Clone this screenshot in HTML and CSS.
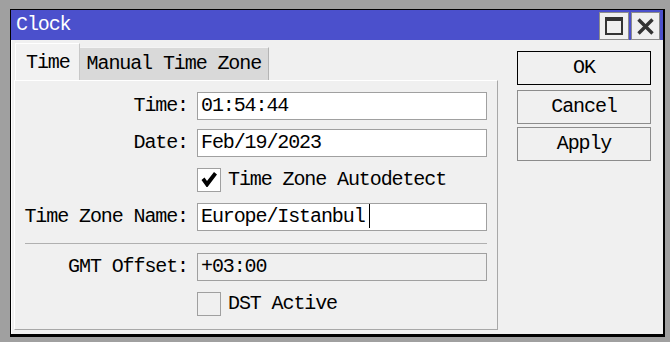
FILE: index.html
```html
<!DOCTYPE html>
<html>
<head>
<meta charset="utf-8">
<title>Clock</title>
<link rel="stylesheet" href="styles.css">
</head>
<body>
<div class="window">
  <div class="titlebar">
    <span class="title">Clock</span>
    <div class="tbtns">
      <div class="tbtn">
        <svg width="30" height="28" viewBox="0 0 30 28"><rect x="7" y="6" width="16" height="16" fill="none" stroke="#333" stroke-width="2"/><rect x="6" y="5" width="18" height="4" fill="#333"/></svg>
      </div>
      <div class="tbtn">
        <svg width="29" height="28" viewBox="0 0 29 28"><path d="M7.5 7.5 L21.5 21.5 M21.5 7.5 L7.5 21.5" stroke="#333" stroke-width="3.4" fill="none"/></svg>
      </div>
    </div>
  </div>
  <div class="content">
    <div class="left">
      <div class="tabs">
        <div class="tab active">Time</div>
        <div class="tab">Manual Time Zone</div>
      </div>
      <div class="panel">
        <div class="label">Time:</div>
        <div class="field">01:54:44</div>
        <div class="label">Date:</div>
        <div class="field">Feb/19/2023</div>
        <div class="label"></div>
        <div class="check-row">
          <span class="checkbox"><svg width="22" height="22" viewBox="0 0 22 22"><path d="M3.5 11 L6.5 8.5 L9 12 L16 3 L19 5.5 L9.5 18 L8.5 18 Z" fill="#000"/></svg></span>
          <span>Time Zone Autodetect</span>
        </div>
        <div class="label">Time Zone Name:</div>
        <div class="field">Europe/Istanbul<span class="caret"></span></div>
        <div class="sep"></div>
        <div class="label">GMT Offset:</div>
        <div class="field disabled">+03:00</div>
        <div class="label"></div>
        <div class="check-row">
          <span class="checkbox disabled"></span>
          <span>DST Active</span>
        </div>
      </div>
    </div>
    <div class="buttons">
      <div class="btn default">OK</div>
      <div class="btn">Cancel</div>
      <div class="btn">Apply</div>
    </div>
  </div>
</div>
</body>
</html>
```
FILE: styles.css
```css
* { box-sizing: border-box; }
html, body { margin: 0; padding: 0; }
body {
  background: #a0a0a0;
  width: 670px;
  height: 342px;
  overflow: hidden;
  font-family: "Liberation Mono", "DejaVu Sans Mono", monospace;
  font-size: 20px;
  letter-spacing: -1.1px;
  color: #000;
}
.window {
  margin: 9px 0 0 10px;
  width: 655px;
  height: 328px;
  border: 1px solid #000;
  border-right-width: 2px;
  border-bottom-width: 3px;
  background: #f0f0f0;
  display: flex;
  flex-direction: column;
}
.titlebar {
  height: 30px;
  background: #4b50cc;
  display: flex;
  justify-content: space-between;
  align-items: flex-end;
  padding-right: 3px;
}
.title {
  color: #fff;
  padding-left: 5px;
  align-self: center;
  line-height: 30px;
}
.tbtns { display: flex; gap: 2px; }
.tbtn {
  height: 28px;
  background: #efefef;
  border: 1px solid #8c8c8c;
  display: flex;
  align-items: center;
  justify-content: center;
}
.tbtn:first-child { width: 30px; }
.tbtn:last-child { width: 29px; }
.tbtn svg { display: block; flex: none; }
.content {
  flex: 1;
  display: flex;
  gap: 19px;
  padding: 3px 0 0 2px;
  border-left: 1px solid #fff;
}
.left { width: 484px; display: flex; flex-direction: column; }
.tabs {
  height: 37px;
  display: flex;
  align-items: flex-end;
  padding-left: 1px;
}
.tab {
  height: 33px;
  line-height: 32px;
  padding: 0 7px 0 7px;
  background: #d9d9d9;
  border-top: 1px solid #f4f4f4;
  border-right: 1px solid #b4b4b4;
}
.tab.active {
  height: 37px;
  line-height: 38px;
  padding: 0 9px 0 10px;
  background: #f2f2f2;
  border-top: 1px solid #fff;
  border-left: 1px solid #fff;
  border-right: 1px solid #c8c8c8;
}
.panel {
  height: 250px;
  border-top: 1px solid #fff;
  border-left: 1px solid #fff;
  border-right: 1px solid #a8a8a8;
  border-bottom: 1px solid #a8a8a8;
  padding-top: 11px;
  display: grid;
  grid-template-columns: 173px 290px;
  grid-template-rows: 28px 28px 28px 28px 4px 28px 28px;
  column-gap: 9px;
  row-gap: 9px;
  align-content: start;
}
.label {
  text-align: right;
  line-height: 28px;
  white-space: nowrap;
}
.field {
  height: 28px;
  background: #fff;
  border: 1px solid #a0a0a0;
  line-height: 26px;
  padding-left: 3px;
  white-space: nowrap;
}
.field.disabled { background: #f0f0f0; }
.caret {
  display: inline-block;
  width: 1px;
  height: 24px;
  background: #000;
  vertical-align: -6px;
  margin-left: 4px;
}
.sep {
  grid-column: 1 / -1;
  height: 1px;
  margin: 3px 0 0 10px;
  background: #b0b0b0;
}
.check-row {
  display: flex;
  align-items: center;
  gap: 7px;
  line-height: 28px;
  white-space: nowrap;
}
.checkbox {
  width: 24px;
  height: 24px;
  background: #fff;
  border: 1px solid #a0a0a0;
  display: flex;
  align-items: center;
  justify-content: center;
  flex: none;
}
.checkbox.disabled { background: #f0f0f0; }
.buttons {
  width: 134px;
  padding-top: 8px;
  display: flex;
  flex-direction: column;
  gap: 3px;
}
.btn {
  height: 34px;
  border: 1px solid #8c8c8c;
  background: #f0f0f0;
  text-align: center;
  line-height: 32px;
}
.btn.default {
  border-color: #000;
  margin-bottom: 2px;
}
```
